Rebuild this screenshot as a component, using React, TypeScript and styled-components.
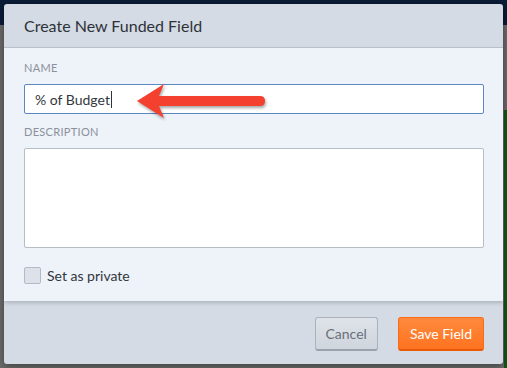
import { createGlobalStyle } from "styled-components";
import styled from "styled-components";

const GlobalStyle = createGlobalStyle`
  html, body {
    margin: 0;
    padding: 0;
  }
  body {
    font-family: Lato, "Open Sans", "Liberation Sans", sans-serif;
    -webkit-font-smoothing: antialiased;
  }
`;

const Page = styled.div`
  width: 507px;
  height: 368px;
  box-sizing: border-box;
  padding: 4px 4px 0 4px;
  overflow: hidden;
  background:
    linear-gradient(to right, transparent 504px, #0f5a17 504px) 0 110px / 100% 100% no-repeat,
    linear-gradient(#0b1c38 0, #0b1c38 25px, #6d6d6d 25px);
  position: relative;
`;

const Modal = styled.div`
  width: 499px;
  display: flex;
  flex-direction: column;
  border-radius: 3px;
  overflow: hidden;
  box-shadow: 0 2px 8px rgba(0, 0, 0, 0.45);
  position: relative;
`;

const Header = styled.div`
  height: 43px;
  display: flex;
  align-items: center;
  padding: 0 20px;
  background: #d4dbe5;
  border-bottom: 1px solid #bcc4cf;
`;

const Title = styled.h2`
  margin: 0;
  font-size: 16px;
  font-weight: 400;
  color: #2e3238;
`;

const Body = styled.div`
  height: 253px;
  box-sizing: border-box;
  padding: 13px 19px 0 20px;
  background: #eef2f9;
  display: flex;
  flex-direction: column;
  box-shadow: 0 2px 4px rgba(0, 0, 0, 0.18);
  position: relative;
  z-index: 1;
`;

const Label = styled.label`
  display: block;
  font-size: 11px;
  letter-spacing: 0.3px;
  color: #8a919c;
  text-transform: uppercase;
  margin-bottom: 10px;
`;

const Field = styled.div`
  display: flex;
  flex-direction: column;
  margin-bottom: 11px;
`;

const TextInput = styled.div<{ focused?: boolean }>`
  height: 30px;
  box-sizing: border-box;
  border: 1px solid ${(p) => (p.focused ? "#5d88bf" : "#b5bdc7")};
  border-radius: 2px;
  background: #fff;
  padding: 0 10px;
  display: flex;
  align-items: center;
  font-size: 14px;
  color: #33373d;
`;

const Caret = styled.span`
  display: inline-block;
  width: 1px;
  height: 17px;
  background: #333;
  margin-left: 1px;
`;

const TextArea = styled.div`
  height: 100px;
  box-sizing: border-box;
  border: 1px solid #b5bdc7;
  border-radius: 2px;
  background: #fff;
`;

const CheckRow = styled.div`
  display: flex;
  align-items: center;
  gap: 6px;
  margin-top: 8px;
  font-size: 14px;
  color: #33373d;
`;

const Box = styled.span`
  width: 17px;
  height: 17px;
  box-sizing: border-box;
  border: 1px solid #b3bac4;
  border-radius: 2px;
  background: #dde2ea;
`;

const Footer = styled.div`
  height: 63px;
  box-sizing: border-box;
  background: #d4dbe5;
  display: flex;
  justify-content: flex-end;
  align-items: flex-start;
  gap: 20px;
  padding: 16px 19px 0 0;
`;

const Button = styled.button<{ primary?: boolean }>`
  height: 34px;
  box-sizing: border-box;
  border-radius: 3px;
  font-family: inherit;
  font-size: 14px;
  padding: 0 ${(p) => (p.primary ? "11px" : "10px")};
  border: 1px solid ${(p) => (p.primary ? "#ff6a10" : "#abb2bc")};
  border-bottom: 2px solid ${(p) => (p.primary ? "#e85a08" : "#9aa1ab")};
  background: ${(p) =>
    p.primary
      ? "linear-gradient(#ff8a3d, #ff7320)"
      : "linear-gradient(#dfe3e9, #cfd5dd)"};
  color: ${(p) => (p.primary ? "#fff" : "#6a707a")};
`;

// annotation arrow laid over the name input
const Arrow = styled.svg`
  position: absolute;
  left: 133px;
  top: 81px;
  z-index: 5;
  filter: drop-shadow(1px 2px 1.5px rgba(0, 0, 0, 0.35));
`;

export default function App() {
  return (
    <>
      <GlobalStyle />
      <Page>
        <Modal>
          <Header>
            <Title>Create New Funded Field</Title>
          </Header>
          <Body>
            <Field>
              <Label>Name</Label>
              <TextInput focused>
                % of Budget
                <Caret />
              </TextInput>
            </Field>
            <Field>
              <Label>Description</Label>
              <TextArea />
            </Field>
            <CheckRow>
              <Box />
              Set as private
            </CheckRow>
          </Body>
          <Footer>
            <Button>Cancel</Button>
            <Button primary>Save Field</Button>
          </Footer>
        </Modal>
        <Arrow width="136" height="42" viewBox="0 0 136 42">
          <path
            d="M4 20 L31 3 L26 15 L127 15 Q132 15 132 20 Q132 25 127 25 L26 25 L31 37 Z"
            fill="#f4412f"
          />
        </Arrow>
      </Page>
    </>
  );
}
